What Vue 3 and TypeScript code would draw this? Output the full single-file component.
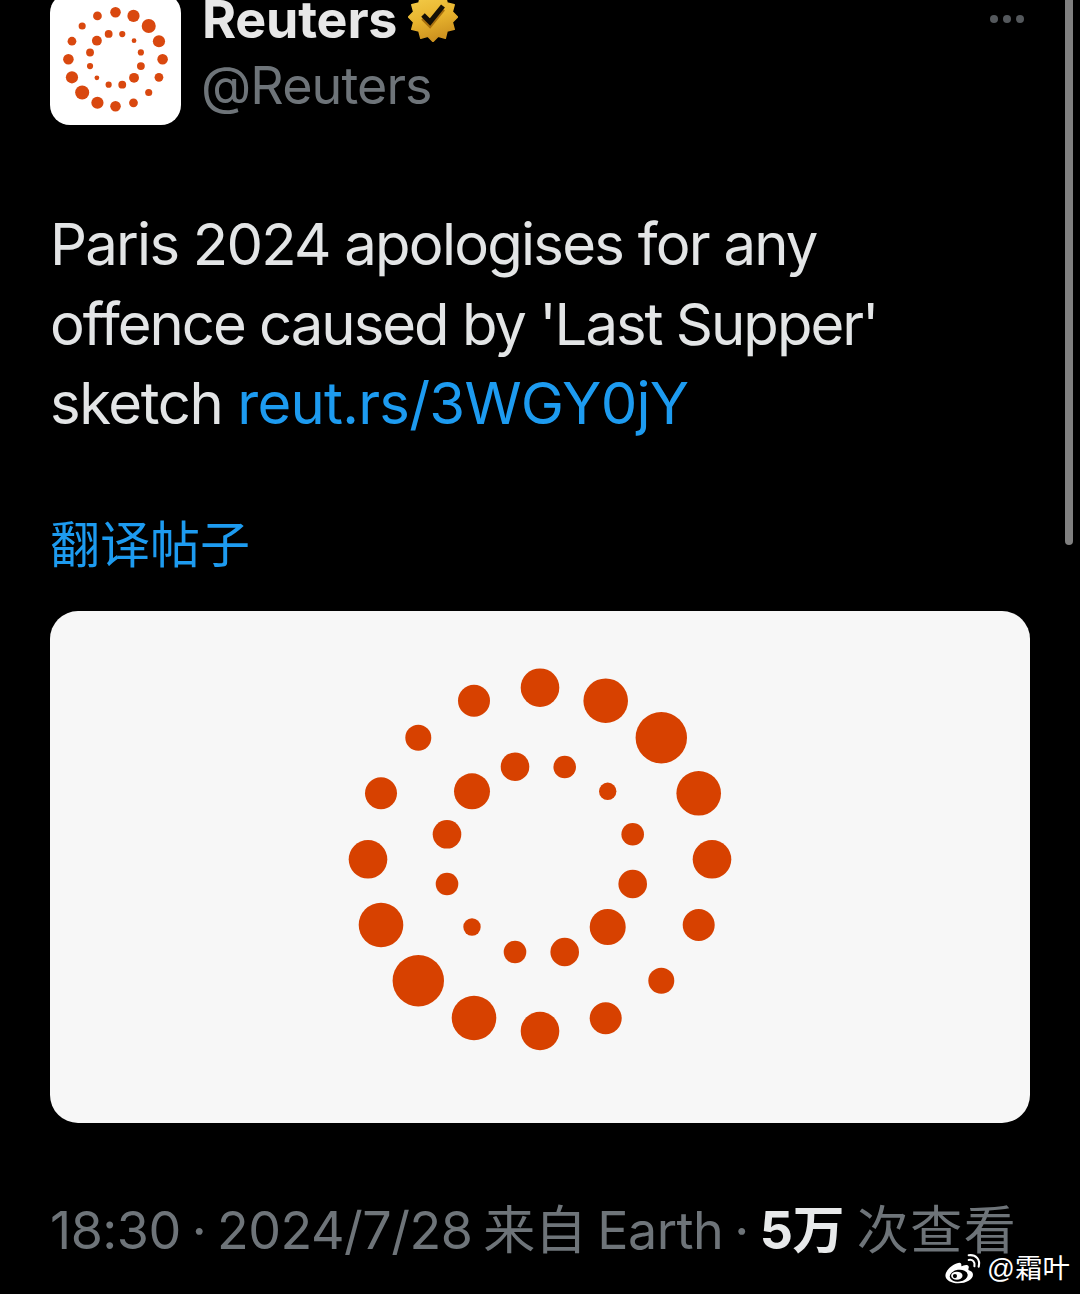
<script setup lang="ts">
type Dot = [number, number, number]

// measured on a 420 box, so both logos can share them
const dots: Dot[] = [
  [210, 37.7, 19.3], [275.7, 50.7, 22.3], [331.3, 87.7, 25.7], [368.7, 143.3, 22.3],
  [382, 209.3, 19.3], [368.7, 275, 16], [331.3, 330.7, 13], [275.7, 368.3, 16],
  [210, 381, 19.3], [144, 368, 22.3], [88.3, 330.7, 25.7], [51, 275, 22.3],
  [38, 209.3, 19.3], [51, 143.3, 16], [88.3, 87.7, 13], [144, 50.7, 16],
  [234.7, 117, 11.3], [277.7, 141.3, 8.7], [302.7, 184.3, 11.3], [302.7, 234, 14.3],
  [277.7, 277, 18], [234.7, 302, 14.3], [185, 302, 11.3], [142, 277, 8.7],
  [117, 234, 11.3], [117, 184.3, 14.3], [142, 141.3, 18], [185, 116.7, 14.3],
]

const badgePoints = (() => {
  const pts: string[] = []
  for (let i = 0; i < 24; i++) {
    const r = i % 2 === 0 ? 24.5 : 20
    const a = (Math.PI * 2 * i) / 24 - Math.PI / 2
    pts.push(`${(25 + r * Math.cos(a)).toFixed(1)},${(25 + r * Math.sin(a)).toFixed(1)}`)
  }
  return pts.join(' ')
})()
</script>

<template>
  <main class="page">
    <header class="author">
      <div class="avatar">
        <svg class="avatar-logo" viewBox="0 0 420 420">
          <circle v-for="(d, i) in dots" :key="i" :cx="d[0]" :cy="d[1]" :r="d[2]" fill="#d9480f" />
        </svg>
      </div>
      <div class="names">
        <div class="name-row">
          <span class="name">Reuters</span>
          <svg class="badge" viewBox="0 0 50 50">
            <defs>
              <linearGradient id="gold" x1="0" y1="0" x2="0.3" y2="1">
                <stop offset="0" stop-color="#f5d04e" />
                <stop offset="0.6" stop-color="#e8b42e" />
                <stop offset="1" stop-color="#cf9420" />
              </linearGradient>
            </defs>
            <polygon :points="badgePoints" fill="url(#gold)" stroke="url(#gold)" stroke-width="1.5" stroke-linejoin="round" />
            <path d="M15 23 L22 30 L35 14" fill="none" stroke="#a8700f" stroke-width="5" transform="translate(0 3)" />
            <path d="M15 23 L22 30 L35 14" fill="none" stroke="#141006" stroke-width="5" />
          </svg>
        </div>
        <div class="handle">@Reuters</div>
      </div>
      <div class="more"><i></i><i></i><i></i></div>
    </header>

    <p class="tweet">
      <span>Paris 2024 apologises for any</span>
      <span class="second">offence caused by 'Last Supper'</span>
      <span class="third">sketch <a class="link">reut.rs/3WGY0jY</a></span>
    </p>

    <a class="translate">翻译帖子</a>

    <section class="card">
      <svg class="card-logo" viewBox="0 0 420 420">
        <circle v-for="(d, i) in dots" :key="i" :cx="d[0]" :cy="d[1]" :r="d[2]" fill="#d74100" />
      </svg>
    </section>

    <footer class="meta">
      <span>18:30 · 2024/7/28 来自 Earth · </span><b class="views">5万</b><span class="views-label"> 次查看</span>
    </footer>

    <div class="scrollbar"></div>

    <div class="watermark">
      <svg class="weibo" viewBox="0 0 40 32">
        <path d="M16 9.500C8.500 11 1.500 17.500 1.500 23c0 4.700 6.300 8 13.500 8 8.500 0 15.500-4 15.500-9 0-2.500-2-4-4.300-4.700-.8-.2-.6-1.200-.3-2 .6-2-.2-3.300-2-3.500-2-.2-4.200.7-5.700 1.400 .3-1.700.1-3.700-2-3.700z" fill="#fff" />
        <ellipse cx="15.500" cy="23" rx="9.500" ry="6.200" fill="#000" transform="rotate(-8 15.500 23)" />
        <ellipse cx="13.500" cy="23" rx="6" ry="4.200" fill="#fff" />
        <circle cx="11.500" cy="23.500" r="2.200" fill="#000" />
        <path d="M26 6.500c4-1 7 2 6 6.500" fill="none" stroke="#fff" stroke-width="2.200" stroke-linecap="round" />
        <path d="M26 1.500c7.500-1 12.500 4.500 10.500 12" fill="none" stroke="#fff" stroke-width="2.200" stroke-linecap="round" />
      </svg>
      <span>@霜叶</span>
    </div>
  </main>
</template>

<style>
html,
body {
  background: #000;
}
</style>

<style scoped>
.page {
  position: relative;
  width: 1080px;
  height: 1294px;
  overflow: hidden;
  background: #000;
  padding: 0 50px;
  box-sizing: border-box;
  font-family: Inter, "Noto Sans CJK SC", sans-serif;
}

.author {
  display: flex;
  gap: 21px;
  margin-top: -7px;
  height: 132px;
}

.avatar {
  width: 131px;
  height: 132px;
  flex: none;
  display: flex;
  align-items: center;
  justify-content: center;
  background: #fff;
  border-radius: 20px;
}

.avatar-logo {
  width: 115px;
  height: 115px;
}

.names {
  flex: 1;
  margin-top: -5px;
}

.name-row {
  display: flex;
  align-items: center;
  gap: 11px;
  height: 62px;
}

.name {
  font-size: 52px;
  font-weight: 700;
  color: #e7e7e7;
  letter-spacing: -0.2px;
}

.badge {
  width: 50px;
  height: 50px;
  margin-top: -4px;
}

.handle {
  margin-top: 5px;
  margin-left: -1px;
  font-size: 52px;
  line-height: 62px;
  letter-spacing: -0.9px;
  color: #6e7479;
}

.more {
  display: flex;
  gap: 5px;
  margin: 22px 6px 0 0;
  height: 8px;
}

.more i {
  width: 8px;
  height: 8px;
  border-radius: 50%;
  background: #54585c;
}

.tweet {
  display: flex;
  flex-direction: column;
  margin: 80px 0 0;
  font-size: 58px;
  line-height: 79.500px;
  letter-spacing: -1.75px;
  color: #e3e5e6;
  white-space: nowrap;
}

.second {
  letter-spacing: -2px;
}

.third {
  letter-spacing: -1.4px;
}

.link {
  letter-spacing: -0.75px;
}

.link,
.translate {
  color: #1d9bf0;
}

.translate {
  display: block;
  margin-top: 70px;
  font-size: 50px;
  line-height: 62px;
}

.card {
  display: flex;
  align-items: center;
  justify-content: center;
  margin-top: 35px;
  width: 980px;
  height: 512px;
  padding-bottom: 14px;
  box-sizing: border-box;
  background: #f7f7f7;
  border-radius: 28px;
}

.card-logo {
  width: 420px;
  height: 420px;
}

.meta {
  margin-top: 77px;
  font-size: 52px;
  line-height: 62px;
  letter-spacing: -0.5px;
  word-spacing: -3.2px;
  color: #6e7479;
  white-space: nowrap;
}

.views {
  color: #e7e9ea;
  font-weight: 700;
}

.views-label {
  letter-spacing: 1.5px;
}

.scrollbar {
  position: absolute;
  top: -10px;
  right: 7px;
  width: 8px;
  height: 555px;
  border-radius: 4px;
  background: #808080;
}

.watermark {
  position: absolute;
  left: 944px;
  top: 1251px;
  display: flex;
  align-items: center;
  gap: 5px;
  color: #fff;
  font-size: 27.500px;
  line-height: 36px;
  font-family: "Liberation Sans", "Noto Sans CJK SC", sans-serif;
}

.weibo {
  width: 38px;
  height: 32px;
}
</style>
